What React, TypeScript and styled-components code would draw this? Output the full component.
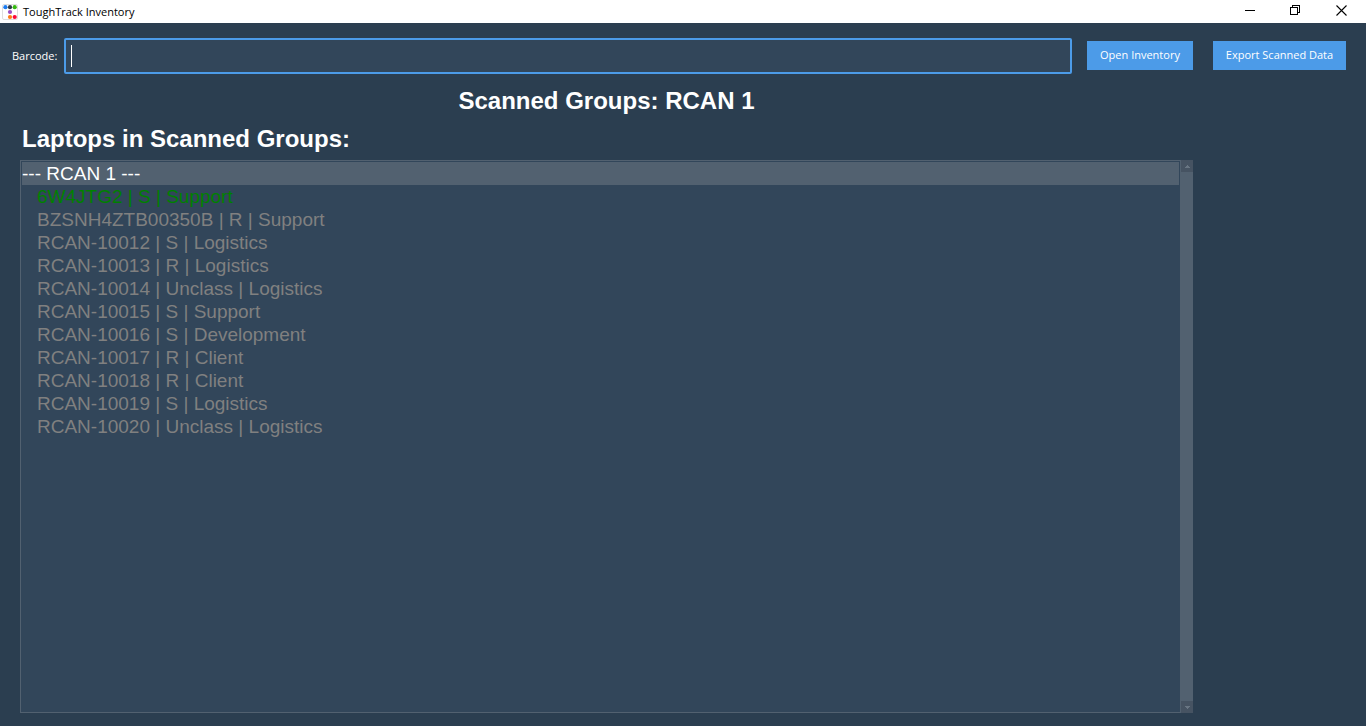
import React, { useState } from "react";
import styled, { createGlobalStyle } from "styled-components";

const GlobalStyle = createGlobalStyle`
  *, *::before, *::after { box-sizing: border-box; }
  body { margin: 0; background: #2b3e50; }
`;

const uiFont = `"Segoe UI", "Open Sans", sans-serif`;
const listFont = `Arial, "Liberation Sans", sans-serif`;

const Window = styled.div`
  display: flex;
  flex-direction: column;
  min-height: 100vh;
  background: #2b3e50;
  color: #ffffff;
  font: 11px/16px ${uiFont};
`;

const TitleBar = styled.header`
  display: flex;
  align-items: center;
  height: 23px;
  padding-left: 2px;
  background: #ffffff;
  color: #000000;
`;

const Title = styled.span`
  flex: 1;
  padding-left: 5px;
`;

const WindowButton = styled.button`
  display: flex;
  align-items: center;
  justify-content: center;
  width: 46px;
  height: 23px;
  padding: 0 3px 3px 0;
  border: 0;
  background: transparent;
  color: #000000;
`;

const Main = styled.main`
  flex: 1;
  display: grid;
  grid-template-columns: auto 1fr auto auto;
  grid-template-rows: 66px auto auto 1fr;
  align-items: center;
  padding: 0 20px 13px 12px;
`;

const FieldLabel = styled.label`
  padding-right: 7px;
`;

const Field = styled.div`
  position: relative;
  display: flex;
`;

const BarcodeInput = styled.input`
  width: 100%;
  min-width: 0;
  height: 36px;
  padding: 0 6px;
  border: 2px solid #4c9be8;
  border-radius: 2px;
  outline: 0;
  background: #32465a;
  color: #ffffff;
  font: inherit;
`;

const Caret = styled.span`
  position: absolute;
  left: 7px;
  top: 7px;
  width: 1px;
  height: 22px;
  background: #ffffff;
  pointer-events: none;
`;

const ActionButton = styled.button<{ $gap: number; $width: number }>`
  min-width: ${(p) => p.$width}px;
  height: 29px;
  margin: 0 0 2px ${(p) => p.$gap}px;
  padding: 0;
  border: 0;
  background: #4c9be8;
  color: #ffffff;
  font: inherit;
  white-space: nowrap;
`;

const Heading = styled.h1<{ $centered?: boolean }>`
  grid-column: 1 / span 3;
  margin: 0 0 0 8px;
  padding: 0 2px;
  font: bold 24px/24px ${listFont};
  text-align: ${(p) => (p.$centered ? "center" : "left")};
  padding-bottom: ${(p) => (p.$centered ? 14 : 9)}px;
`;

const ListPanel = styled.div`
  grid-column: 1 / span 3;
  align-self: stretch;
  display: flex;
  margin-left: 8px;
`;

const List = styled.ul`
  flex: 1;
  margin: 0;
  padding: 1px 0;
  border: 1px solid #526170;
  border-right: 0;
  background: #32465a;
  list-style: none;
  font: 19px/23px ${listFont};
`;

const Item = styled.li<{ $kind: Kind }>`
  height: 23px;
  margin: 0 1px;
  padding-left: ${(p) => (p.$kind === "group" ? 0 : 15)}px;
  background: ${(p) => (p.$kind === "group" ? "#526170" : "transparent")};
  color: ${(p) => ({ group: "#ffffff", found: "#008000", missing: "#808080" })[p.$kind]};
`;

const ScrollTrack = styled.div`
  display: flex;
  flex-direction: column;
  justify-content: space-between;
  width: 13px;
  border-left: 1px solid #526170;
  background: #526170;
`;

const ArrowButton = styled.button`
  display: flex;
  align-items: center;
  justify-content: center;
  height: 12px;
  padding: 0;
  border: 0;
  background: #465362;
`;

type Kind = "group" | "found" | "missing";

const rows: { text: string; kind: Kind }[] = [
  { text: "--- RCAN 1 ---", kind: "group" },
  { text: "6W4JTG2 | S | Support", kind: "found" },
  { text: "BZSNH4ZTB00350B | R | Support", kind: "missing" },
  { text: "RCAN-10012 | S | Logistics", kind: "missing" },
  { text: "RCAN-10013 | R | Logistics", kind: "missing" },
  { text: "RCAN-10014 | Unclass | Logistics", kind: "missing" },
  { text: "RCAN-10015 | S | Support", kind: "missing" },
  { text: "RCAN-10016 | S | Development", kind: "missing" },
  { text: "RCAN-10017 | R | Client", kind: "missing" },
  { text: "RCAN-10018 | R | Client", kind: "missing" },
  { text: "RCAN-10019 | S | Logistics", kind: "missing" },
  { text: "RCAN-10020 | Unclass | Logistics", kind: "missing" },
];

const AppLogo = () => (
  <svg width="16" height="16" viewBox="0 0 16 16" aria-hidden="true">
    <rect x="0.5" y="0.5" width="15" height="15" rx="1.5" fill="#fff" stroke="#dedede" />
    <circle cx="3.4" cy="3.2" r="2.1" fill="#1c7cf0" />
    <circle cx="8" cy="3.2" r="2.1" fill="#2f3a48" />
    <circle cx="12.7" cy="3.2" r="2.1" fill="#35b80f" />
    <circle cx="8" cy="8" r="2.1" fill="#9b4fc4" />
    <circle cx="8" cy="13" r="2.1" fill="#ff7a14" />
    <circle cx="12.7" cy="13" r="2.1" fill="#fb0838" />
  </svg>
);

export default function App() {
  const [barcode, setBarcode] = useState("");
  return (
    <Window>
      <GlobalStyle />
      <TitleBar>
        <AppLogo />
        <Title>ToughTrack Inventory</Title>
        <WindowButton aria-label="Minimize">
          <svg width="11" height="11" shapeRendering="crispEdges">
            <path d="M1 5.5H11" stroke="currentColor" />
          </svg>
        </WindowButton>
        <WindowButton aria-label="Restore">
          <svg width="11" height="11" fill="none" stroke="currentColor" shapeRendering="crispEdges">
            <path d="M0.5 2.5H7.5V9.5H0.5ZM2.5 2.5V0.5H9.5V7.5H7.5" />
          </svg>
        </WindowButton>
        <WindowButton aria-label="Close">
          <svg width="11" height="11" stroke="currentColor" strokeWidth="1.1">
            <path d="M0.5 0.5L10.5 10.5M10.5 0.5L0.5 10.5" />
          </svg>
        </WindowButton>
      </TitleBar>
      <Main>
        <FieldLabel htmlFor="barcode">Barcode:</FieldLabel>
        <Field>
          <BarcodeInput id="barcode" value={barcode} onChange={(e) => setBarcode(e.target.value)} />
          {barcode === "" && <Caret />}
        </Field>
        <ActionButton $gap={15} $width={106}>Open Inventory</ActionButton>
        <ActionButton $gap={20} $width={133}>Export Scanned Data</ActionButton>
        <Heading $centered>Scanned Groups: RCAN 1</Heading>
        <Heading as="h2">Laptops in Scanned Groups:</Heading>
        <ListPanel>
          <List role="listbox" aria-label="Laptops in Scanned Groups">
            {rows.map((row) => (
              <Item key={row.text} role="option" aria-selected={row.kind === "group"} $kind={row.kind}>
                {row.text}
              </Item>
            ))}
          </List>
          <ScrollTrack>
            <ArrowButton aria-label="Scroll up">
              <svg width="5" height="3" fill="#697683" shapeRendering="crispEdges">
                <path d="M2 0H3V1H4V2H5V3H0V2H1V1H2Z" />
              </svg>
            </ArrowButton>
            <ArrowButton aria-label="Scroll down">
              <svg width="5" height="3" fill="#697683" shapeRendering="crispEdges">
                <path d="M0 0H5V1H4V2H3V3H2V2H1V1H0Z" />
              </svg>
            </ArrowButton>
          </ScrollTrack>
        </ListPanel>
      </Main>
    </Window>
  );
}
